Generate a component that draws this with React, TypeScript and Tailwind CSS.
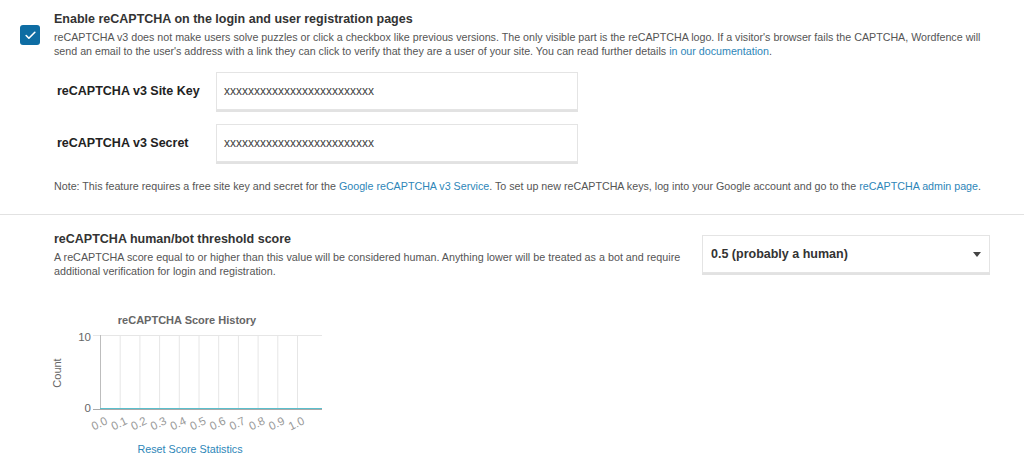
import { Check } from 'lucide-react';

const ticks = ['0.0', '0.1', '0.2', '0.3', '0.4', '0.5', '0.6', '0.7', '0.8', '0.9', '1.0'];

const ScoreChart = () => {
  const left = 60;
  const step = 19.7;
  return (
    <svg width={300} height={135} viewBox="0 0 300 135" className="block">
      <text x={147} y={19} textAnchor="middle" fontSize={11} fontWeight={700} fill="#666">
        reCAPTCHA Score History
      </text>
      <text
        x={0}
        y={0}
        transform="translate(21 68) rotate(-90)"
        textAnchor="middle"
        fontSize={11}
        fill="#666"
      >
        Count
      </text>
      <text x={51} y={36} textAnchor="end" fontSize={11.5} fill="#666">10</text>
      <text x={51} y={107} textAnchor="end" fontSize={11.5} fill="#666">0</text>
      <line x1={53} y1={30.5} x2={282} y2={30.5} stroke="#e6e6e6" />
      {ticks.map((_, i) => (
        <line
          key={i}
          x1={left + i * step + 0.5}
          y1={30}
          x2={left + i * step + 0.5}
          y2={104}
          stroke={i === 0 ? '#bdbdbd' : '#e6e6e6'}
        />
      ))}
      <line x1={53} y1={104.5} x2={282} y2={104.5} stroke="#a9a9a9" />
      <line x1={left} y1={103.5} x2={282} y2={103.5} stroke="#5bbfcc" strokeWidth={1.2} />
      {ticks.map((t, i) => (
        <text
          key={t}
          x={0}
          y={0}
          transform={`translate(${left + i * step + 1} 122) rotate(-25)`}
          textAnchor="middle"
          fontSize={11.5}
          fill="#999"
        >
          {t}
        </text>
      ))}
    </svg>
  );
};

const KeyRow = ({ label }: { label: string }) => (
  <div className="flex items-center">
    <div className="box-content w-[159px] pl-[57px] text-[12.5px] font-bold text-[#222]">
      {label}
    </div>
    <div className="flex h-[38px] w-[362px] items-center border border-[#e4e4e4] bg-white pl-[7px] text-[12px] text-[#444] shadow-[0_2px_0_#e2e2e2]">
      xxxxxxxxxxxxxxxxxxxxxxxxx
    </div>
  </div>
);

const App = () => {
  return (
    <div className="h-[458px] w-[1024px] overflow-hidden bg-white font-['Liberation_Sans',Arial,sans-serif] text-[#555]">
      <div className="flex pl-[20px] pt-[11px]">
        <div className="mt-[14px] flex h-[20px] w-[20px] items-center justify-center rounded-[3px] bg-[#0e6da3]">
          <Check size={13} strokeWidth={3} color="#fff" />
        </div>
        <div className="ml-[14px] w-[960px]">
          <div className="text-[12.5px] font-bold leading-[16px] text-[#333]">
            Enable reCAPTCHA on the login and user registration pages
          </div>
          <p className="mt-[3px] text-[10.7px] leading-[14px]">
            reCAPTCHA v3 does not make users solve puzzles or click a checkbox like previous versions. The only visible part is the reCAPTCHA logo. If a visitor's browser fails the CAPTCHA, Wordfence will<br />
            send an email to the user's address with a link they can click to verify that they are a user of your site. You can read further details{' '}
            <a className="text-[#2e86b8]">in our documentation</a>.
          </p>
        </div>
      </div>

      <div className="mt-[14px] flex flex-col gap-[14px]">
        <KeyRow label="reCAPTCHA v3 Site Key" />
        <KeyRow label="reCAPTCHA v3 Secret" />
      </div>

      <p className="ml-[54px] mt-[17px] text-[10.7px] leading-[14px]">
        Note: This feature requires a free site key and secret for the{' '}
        <a className="text-[#2e86b8]">Google reCAPTCHA v3 Service</a>. To set up new reCAPTCHA keys, log into your Google account and go to the{' '}
        <a className="text-[#2e86b8]">reCAPTCHA admin page</a>.
      </p>

      <div className="mt-[21px] h-px w-full bg-[#e2e2e2]" />

      <div className="flex items-start pl-[54px] pt-[16px]">
        <div className="w-[640px]">
          <div className="text-[12.5px] font-bold leading-[16px] text-[#333]">
            reCAPTCHA human/bot threshold score
          </div>
          <p className="mt-[3px] text-[10.75px] leading-[14px]">
            A reCAPTCHA score equal to or higher than this value will be considered human. Anything lower will be treated as a bot and require additional verification for login and registration.
          </p>
        </div>
        <div className="ml-[8px] mt-[4px] flex h-[38px] w-[288px] items-center justify-between border border-[#e4e4e4] bg-white pl-[8px] pr-[8px] text-[12.5px] font-bold text-[#333] shadow-[0_2px_0_#e2e2e2]">
          <span>0.5 (probably a human)</span>
          <svg width="8" height="5" viewBox="0 0 8 5">
            <path d="M0 0h8L4 5z" fill="#444" />
          </svg>
        </div>
      </div>

      <div className="ml-[40px] mt-[27px] w-[300px]">
        <ScoreChart />
        <div className="mt-[2px] text-center text-[10.75px] leading-[14px]">
          <a className="text-[#2e86b8]">Reset Score Statistics</a>
        </div>
      </div>
    </div>
  );
};

export default App;
